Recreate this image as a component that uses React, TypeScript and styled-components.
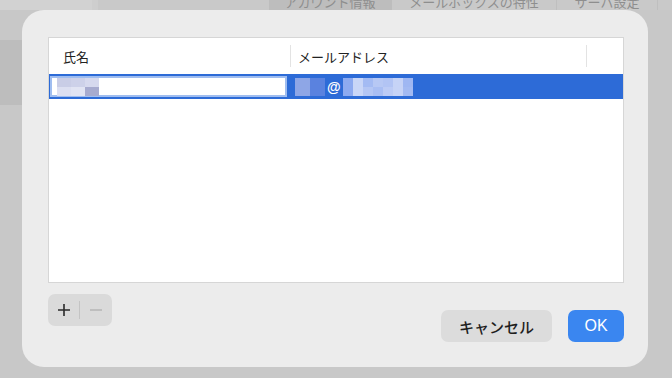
import React from 'react'
import styled, { createGlobalStyle } from 'styled-components'

const Global = createGlobalStyle`
  html, body { margin: 0; padding: 0; }
  body {
    width: 672px;
    height: 378px;
    overflow: hidden;
    background: #c9c9c9;
    font-family: "Noto Sans CJK JP", "Noto Sans", sans-serif;
  }
`

const Screen = styled.div`
  position: relative;
  width: 672px;
  height: 378px;
  overflow: hidden;
  background: #c8c8c8;
`

const TopStrip = styled.div`
  display: flex;
  height: 10px;
  overflow: hidden;
  align-items: flex-end;
  background: #c9c9c9;
`

const Corner = styled.div`
  width: 92px;
  height: 10px;
  background: #d2d2d2;
  border-right: 6px solid #cecece;
`

const Tabs = styled.div`
  display: flex;
  margin-left: 171px;
  align-items: flex-end;
`

const Tab = styled.div<{ $active?: boolean; $w: number }>`
  width: ${p => p.$w}px;
  height: 20px;
  display: flex;
  justify-content: center;
  align-items: center;
  font-size: 13px;
  color: #8e8e8e;
  background: ${p => (p.$active ? '#bdbdbd' : 'transparent')};
  border-right: 1px solid ${p => (p.$active ? 'transparent' : '#bfbfbf')};
  margin-bottom: -1px;
  white-space: nowrap;
`

const SideBand = styled.div`
  width: 22px;
  height: 65px;
  margin-top: 30px;
  background: #bdbdbd;
`

const Dialog = styled.div`
  position: absolute;
  left: 22px;
  top: 10px;
  width: 626px;
  height: 357px;
  box-sizing: border-box;
  padding: 27px 24px 25px 26px;
  background: #ececec;
  border-radius: 22px;
  display: flex;
  flex-direction: column;
`

const Table = styled.div`
  height: 246px;
  background: #ffffff;
  border: 1px solid #d6d6d6;
  box-sizing: border-box;
  display: flex;
  flex-direction: column;
`

const HeaderRow = styled.div`
  display: flex;
  height: 36px;
  align-items: center;
`

const HeaderCell = styled.div<{ $w?: number; $pad?: number; $last?: boolean }>`
  ${p => (p.$w ? `width: ${p.$w}px;` : 'flex: 1;')}
  height: 22px;
  box-sizing: border-box;
  padding-left: ${p => p.$pad ?? 0}px;
  display: flex;
  align-items: center;
  font-size: 13px;
  color: #222;
  border-right: ${p => (p.$last ? 'none' : '1px solid #e3e3e3')};
`

const SelectedRow = styled.div`
  display: flex;
  align-items: center;
  height: 25px;
  background: #2d6bd7;
`

const NameField = styled.div`
  margin-left: 1px;
  width: 237px;
  height: 21px;
  box-sizing: border-box;
  background: #fff;
  border: 2px solid #9fbdf0;
  display: flex;
  align-items: center;
  padding-left: 5px;
`

const EmailCell = styled.div`
  display: flex;
  align-items: center;
  margin-left: 8px;
  height: 19px;
  gap: 2px;
`

const At = styled.span`
  color: #fff;
  font-family: "Liberation Sans", sans-serif;
  font-size: 14px;
  font-weight: 700;
  line-height: 1;
`

const Pixels = styled.div<{ $cols: number; $cw: number }>`
  display: grid;
  grid-template-columns: repeat(${p => p.$cols}, ${p => p.$cw}px);
  grid-auto-rows: 9px;
`

const Cell = styled.div<{ $c: string }>`
  background: ${p => p.$c};
`

const Footer = styled.div`
  display: flex;
  justify-content: space-between;
  align-items: flex-start;
  margin-top: 11px;
`

const Segment = styled.div`
  display: flex;
  align-items: center;
  height: 32px;
  width: 64px;
  border-radius: 7px;
  background: #dadada;
`

const SegButton = styled.div<{ $dim?: boolean }>`
  width: 31px;
  height: 32px;
  display: flex;
  align-items: center;
  justify-content: center;
  color: ${p => (p.$dim ? '#b2b2b2' : '#2a2a2a')};
`

const SegDivider = styled.div`
  width: 1px;
  height: 18px;
  background: #c4c4c4;
`

const Buttons = styled.div`
  display: flex;
  gap: 16px;
  margin-top: 16px;
`

const Button = styled.div<{ $primary?: boolean; $w: number }>`
  width: ${p => p.$w}px;
  height: 32px;
  border-radius: 7px;
  display: flex;
  align-items: center;
  justify-content: center;
  font-size: ${p => (p.$primary ? 16 : 15)}px;
  font-weight: 500;
  font-family: ${p => (p.$primary ? '"Liberation Sans", "Noto Sans", sans-serif' : '"Noto Sans CJK JP", sans-serif')};
  color: ${p => (p.$primary ? '#ffffff' : '#1f1f1f')};
  background: ${p => (p.$primary ? '#3a86f0' : '#dcdcdc')};
`

const nameCells = ['#c9cde6', '#cdd1e9', '#d6d9ee', '#dcdff1', '#e1e4f3', '#a7abcf']
const userCells = ['#8ea6e6', '#5a82df', '#8ea6e6', '#5a82df']
const domainCells = [
  '#8daaf0', '#c9d6f7', '#a4bbf3', '#b7c8f4', '#b2c4f4', '#c6d3f6', '#9fb7f2',
  '#8daaf0', '#c9d6f7', '#b4c6f4', '#a9bef3', '#bccbf5', '#c6d3f6', '#a3baf2',
]

function Plus() {
  return (
    <svg width="14" height="14" viewBox="0 0 14 14">
      <path d="M7 1v12M1 7h12" stroke="currentColor" strokeWidth="1.6" />
    </svg>
  )
}

function Minus() {
  return (
    <svg width="14" height="14" viewBox="0 0 14 14">
      <path d="M1 7h12" stroke="currentColor" strokeWidth="1.4" />
    </svg>
  )
}

export default function App() {
  return (
    <>
      <Global />
      <Screen>
        <TopStrip>
          <Corner />
          <Tabs>
            <Tab $w={122} $active>アカウント情報</Tab>
            <Tab $w={164}>メールボックスの特性</Tab>
            <Tab $w={100}>サーバ設定</Tab>
          </Tabs>
        </TopStrip>
        <SideBand />
        <Dialog>
          <Table>
            <HeaderRow>
              <HeaderCell $w={242} $pad={14}>氏名</HeaderCell>
              <HeaderCell $w={296} $pad={7}>メールアドレス</HeaderCell>
              <HeaderCell $last />
            </HeaderRow>
            <SelectedRow>
              <NameField>
                <Pixels $cols={3} $cw={14}>
                  {nameCells.map((c, i) => <Cell key={i} $c={c} />)}
                </Pixels>
              </NameField>
              <EmailCell>
                <Pixels $cols={2} $cw={15}>
                  {userCells.map((c, i) => <Cell key={i} $c={c} />)}
                </Pixels>
                <At>@</At>
                <Pixels $cols={7} $cw={10}>
                  {domainCells.map((c, i) => <Cell key={i} $c={c} />)}
                </Pixels>
              </EmailCell>
            </SelectedRow>
          </Table>
          <Footer>
            <Segment>
              <SegButton><Plus /></SegButton>
              <SegDivider />
              <SegButton $dim><Minus /></SegButton>
            </Segment>
            <Buttons>
              <Button $w={111}>キャンセル</Button>
              <Button $w={56} $primary>OK</Button>
            </Buttons>
          </Footer>
        </Dialog>
      </Screen>
    </>
  )
}
